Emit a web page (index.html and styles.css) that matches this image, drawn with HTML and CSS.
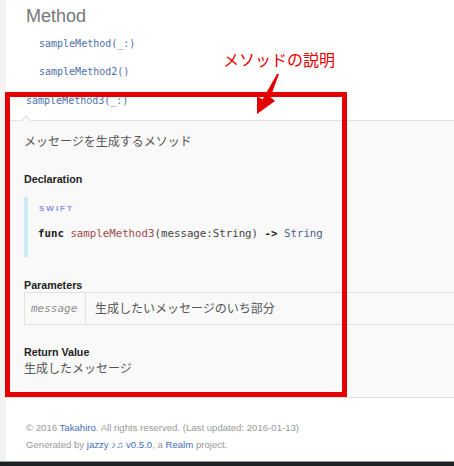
FILE: index.html
```html
<!DOCTYPE html>
<html lang="ja">
<head>
<meta charset="utf-8">
<title>Method</title>
<link rel="stylesheet" href="styles.css">
</head>
<body>
<div class="page">
  <div class="side"></div>
  <div class="main">
    <h3 class="title">Method</h3>
    <ul class="list">
      <li class="item"><a class="link" href="#">sampleMethod(_:)</a></li>
      <li class="item"><a class="link" href="#">sampleMethod2()</a></li>
    </ul>
    <div class="item token-row"><a class="link" href="#">sampleMethod3(_:)</a></div>
    <section class="detail">
      <p class="desc">メッセージを生成するメソッド</p>
      <h4 class="heading">Declaration</h4>
      <div class="decl">
        <p class="lang">SWIFT</p>
        <pre class="code"><span class="kw">func</span> <span class="fn">sampleMethod3</span>(message:String) <span class="op">-&gt;</span> <span class="ty">String</span></pre>
      </div>
      <h4 class="heading">Parameters</h4>
      <table class="params">
        <tr>
          <td class="pname">message</td>
          <td class="pdesc">生成したいメッセージのいち部分</td>
        </tr>
      </table>
      <h4 class="heading heading-tight">Return Value</h4>
      <p class="ret">生成したメッセージ</p>
    </section>
    <footer class="footer">
      <p class="foot-line">© 2016 <a class="foot-link" href="#">Takahiro</a>. All rights reserved. (Last updated: 2016-01-13)</p>
      <p class="foot-line">Generated by <a class="foot-link" href="#">jazzy ♪♫ v0.5.0</a>, a <a class="foot-link" href="#">Realm</a> project.</p>
    </footer>
  </div>
</div>
<div class="bottombar"></div>

<div class="callout-box"></div>
<div class="callout-label">メソッドの説明</div>
<svg class="callout-arrow" width="454" height="466" viewBox="0 0 454 466">
  <polygon points="279,74 270.5,97 275,101 257,114 257,96 262.5,99.5 277,74" fill="#e50000"/>
</svg>
</body>
</html>
```

FILE: styles.css
```css
* { box-sizing: border-box; }

html, body {
  margin: 0;
  padding: 0;
}

body {
  width: 454px;
  height: 466px;
  overflow: hidden;
  position: relative;
  background: #fff;
  color: #333;
  font-family: "Liberation Sans", "Noto Sans CJK JP", sans-serif;
}

.page {
  display: flex;
  height: 461px;
}

.side {
  flex: none;
  width: 6px;
  background: #f2f2f2;
}

.main {
  flex: 1;
  min-width: 0;
  display: flex;
  flex-direction: column;
}

.title {
  margin: 5px 0 3px 20px;
  font-size: 18px;
  line-height: 22px;
  font-weight: normal;
  color: #777;
}

.list {
  list-style: none;
  margin: 0;
  padding: 0 0 0 33px;
}

.item {
  height: 28px;
  line-height: 28px;
  font-family: "DejaVu Sans Mono", monospace;
  font-size: 10px;
}

.token-row {
  padding-left: 20px;
  line-height: 29px;
}

.link {
  color: #4e70a8;
  text-decoration: none;
}

.detail {
  position: relative;
  margin-top: 6px;
  background: #f9f9f9;
  border-top: 1px solid #e2e2e2;
  border-bottom: 1px solid #e2e2e2;
  padding: 12px 0 19px 18px;
}

.detail::before {
  content: "";
  position: absolute;
  left: 15.5px;
  top: -4.5px;
  width: 7px;
  height: 7px;
  background: #f9f9f9;
  border-top: 1px solid #e2e2e2;
  border-left: 1px solid #e2e2e2;
  transform: rotate(45deg);
}

.desc {
  margin: 0;
  font-size: 12px;
  line-height: 18px;
  color: #555;
}

.heading {
  margin: 21px 0 0;
  font-size: 10.7px;
  line-height: 14px;
  font-weight: bold;
  color: #222;
}

.heading-tight {
  margin-top: 20px;
}

.decl {
  margin-top: 11px;
  border-left: 4px solid #cde9f4;
  padding: 7px 0 15px 10px;
}

.lang {
  margin: 0 0 0 1px;
  font-size: 8px;
  line-height: 10px;
  letter-spacing: 2px;
  font-weight: bold;
  color: #8c8ff2;
}

.code {
  margin: 12px 0 0;
  font-family: "DejaVu Sans Mono", monospace;
  font-size: 10.75px;
  line-height: 16px;
  color: #444;
}

.kw { font-weight: bold; color: #222; }
.fn { color: #a04a4a; }
.op { font-weight: bold; color: #222; }
.ty { color: #4a5f8c; }

.params {
  width: calc(100% + 20px);
  border-collapse: collapse;
  border: 1px solid #e2e2e2;
}

.params td {
  height: 32px;
  border: 1px solid #e2e2e2;
  padding: 0;
  vertical-align: middle;
}

.params .pname {
  width: 61px;
  padding: 0 7px 0 6px;
  font-family: "DejaVu Sans Mono", monospace;
  font-size: 11px;
  font-style: italic;
  color: #8f8f8f;
}

.params .pdesc {
  padding-left: 9px;
  font-size: 12px;
  line-height: 18px;
  color: #555;
}

.ret {
  margin: 1px 0 0;
  font-size: 12px;
  line-height: 18px;
  color: #555;
}

.footer {
  padding: 21px 0 0 20px;
}

.foot-line {
  margin: 0;
  font-size: 9.6px;
  line-height: 17px;
  color: #999;
}

.foot-link {
  color: #3f6fb8;
  text-decoration: none;
}

.bottombar {
  height: 5px;
  border-top: 1px solid #9a9a9a;
  background: #1d2125;
}

/* annotation overlays */
.callout-box {
  position: absolute;
  left: 5px;
  top: 92px;
  width: 342px;
  height: 305px;
  border: 5px solid #e50000;
}

.callout-label {
  position: absolute;
  left: 223px;
  top: 51px;
  font-family: "Noto Sans CJK JP", sans-serif;
  font-size: 16px;
  line-height: 16px;
  color: #e50000;
  white-space: nowrap;
}

.callout-arrow {
  position: absolute;
  left: 0;
  top: 0;
  pointer-events: none;
}
```
